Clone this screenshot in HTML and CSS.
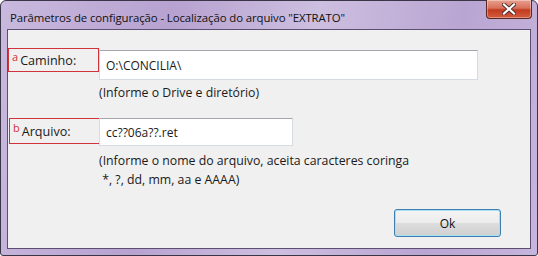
FILE: index.html
```html
<!DOCTYPE html>
<html lang="pt-BR">
<head>
  <meta charset="UTF-8" />
  <title>Parâmetros de configuração</title>
  <link rel="stylesheet" href="styles.css">
</head>
<body>
  <div class="window">
    <div class="titlebar">
      <span class="title">Parâmetros de configuração - Localização do arquivo "EXTRATO"</span>
      <button class="close">
        <svg width="14" height="12" viewBox="0 0 14 12">
          <path d="M2 1.5 L12 10.5 M12 1.5 L2 10.5" stroke="#4a2a2a" stroke-width="4" stroke-linecap="square"/>
          <path d="M2 1.5 L12 10.5 M12 1.5 L2 10.5" stroke="#ffffff" stroke-width="2.2" stroke-linecap="square"/>
        </svg>
      </button>
    </div>
    <div class="client">
      <div class="row row-path">
        <label class="tag"><sup>a</sup>Caminho:</label>
        <div class="field field-long">O:\CONCILIA\</div>
      </div>
      <p class="hint hint-path">(Informe o Drive e diretório)</p>

      <div class="row row-file">
        <label class="tag tag-file"><sup>b</sup>Arquivo:</label>
        <div class="field field-short">cc??06a??.ret</div>
      </div>
      <p class="hint hint-file">(Informe o nome do arquivo, aceita caracteres coringa</p>
      <p class="hint hint-wild">&nbsp;*, ?, dd, mm, aa e AAAA)</p>

      <div class="actions">
        <button class="ok">Ok</button>
      </div>
    </div>
  </div>
</body>
</html>
```

FILE: styles.css
```css
:root {
  --frame: #bfaed6;
  --frame-dark: #3b3548;
  --client-bg: #f0f0f0;
  --text: #1a1a1a;
  --tag-red: #d2323a;
}
* {
  box-sizing: border-box;
}
body {
  margin: 0;
  background: #ffffff;
  font-family: 'Open Sans', 'Noto Sans', sans-serif;
  font-size: 12.3px;
  color: var(--text);
}
.window {
  width: 538px;
  height: 256px;
  display: flex;
  flex-direction: column;
  padding: 0 6px 6px 6px;
  border: 1px solid var(--frame-dark);
  border-radius: 6px 6px 3px 3px;
  background: linear-gradient(100deg, #c9b9de 0%, #b7a2d0 30%, #cdbfe0 55%, #b9a5d2 80%, #c6b5dc 100%);
}
.titlebar {
  height: 28px;
  display: flex;
  align-items: flex-start;
  justify-content: space-between;
}
.title {
  margin: 9px 0 0 3px;
  font-size: 11.4px;
  color: #111111;
  letter-spacing: -0.1px;
}
.close {
  width: 46px;
  height: 19px;
  margin: -1px -1px 0 0;
  padding: 0;
  border: 1px solid #5a2820;
  border-top: none;
  border-radius: 0 0 4px 4px;
  background: linear-gradient(#e8a08e 0%, #d8705a 45%, #c23b20 55%, #d45c3e 100%);
  display: flex;
  align-items: center;
  justify-content: center;
  box-shadow: inset 0 0 0 1px rgba(255, 255, 255, 0.35);
}
.client {
  flex: 1;
  background: var(--client-bg);
  border: 1px solid #5c4e70;
  display: flex;
  flex-direction: column;
}
.row {
  display: flex;
  align-items: flex-start;
}
.row-path {
  margin-top: 18px;
}
.row-file {
  margin-top: 16px;
}
.tag {
  width: 91px;
  height: 24px;
  border: 1px solid var(--tag-red);
  display: flex;
  align-items: center;
  padding-left: 3px;
  font-size: 12.6px;
}
.tag-file {
  height: 26px;
  margin-left: 1px;
}
.tag sup {
  color: var(--tag-red);
  font-size: 11px;
  margin: -8px 2px 0 0;
  line-height: 1;
}
.field {
  height: 30px;
  margin-top: 2px;
  background: #ffffff;
  border: 1px solid #d6dbe1;
  border-top-color: #a4a8ae;
  display: flex;
  align-items: center;
  padding-left: 6px;
  font-size: 12px;
}
.field-long {
  width: 379px;
}
.field-short {
  width: 194px;
  height: 28px;
  margin-top: 0;
  margin-left: -1px;
}
.hint {
  margin: 0;
  padding-left: 91px;
  line-height: 19px;
}
.hint-path {
  margin-top: 3px;
}
.hint-file {
  margin-top: 5px;
}
.actions {
  display: flex;
  justify-content: flex-end;
  padding-right: 29px;
  margin-top: 20px;
}
.ok {
  width: 107px;
  height: 28px;
  border: 1px solid #3c7fb1;
  border-radius: 3px;
  background: linear-gradient(#f4f4f4 0%, #ececec 48%, #dcdcdc 52%, #d0d0d0 100%);
  box-shadow: inset 0 0 0 1px #a9dff5;
  font-family: 'Open Sans', 'Noto Sans', sans-serif;
  font-size: 12px;
  color: #111111;
  padding: 0;
}
```
